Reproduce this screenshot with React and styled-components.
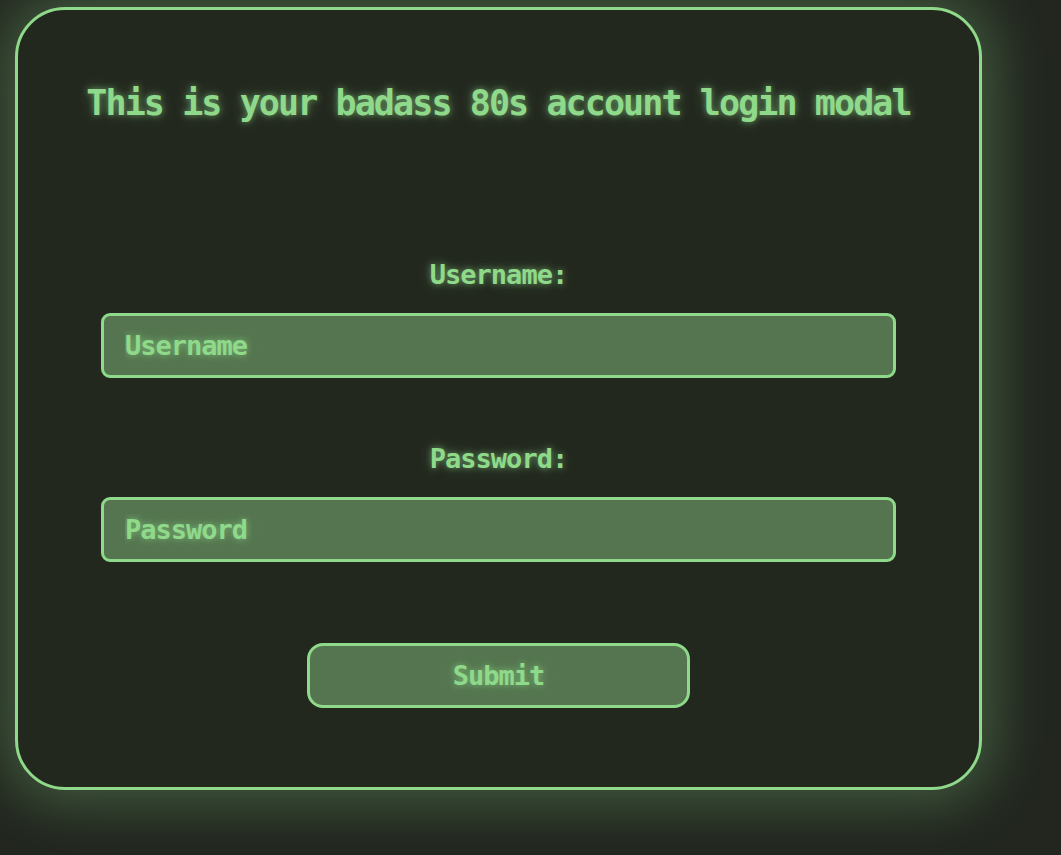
import React from "react";
import styled, {createGlobalStyle} from "styled-components";

const GlobalStyle = createGlobalStyle`
  html, body {
    margin: 0;
    padding: 0;
    background: #22261f;
  }
  * {
    box-sizing: border-box;
  }
`;

const green = "#8fd98a";
const glow = "0 0 6px rgba(143, 217, 138, 0.55), 0 0 14px rgba(143, 217, 138, 0.3)";

const Page = styled.div`
  min-height: 855px;
  padding: 7px 0 0 15px;
  font-family: "DejaVu Sans Mono", "Liberation Mono", monospace;
  font-weight: bold;
  color: ${green};
`;

const Modal = styled.div`
  width: 967px;
  height: 783px;
  border: 3px solid ${green};
  border-radius: 50px;
  background: #23281f;
  box-shadow: 0 0 55px 12px rgba(143, 217, 138, 0.3);
  display: flex;
  flex-direction: column;
  align-items: center;
  padding-top: 73px;
`;

const Title = styled.h1`
  margin: 0;
  font-size: 35px;
  line-height: 40px;
  letter-spacing: -1.9px;
  font-weight: bold;
  text-shadow: ${glow};
`;

const Form = styled.form`
  width: 795px;
  display: flex;
  flex-direction: column;
  align-items: center;
  margin-top: 137px;
`;

const Label = styled.label`
  font-size: 27px;
  line-height: 30px;
  letter-spacing: -1px;
  text-shadow: ${glow};
  margin-top: ${(p) => (p.first ? "0" : "66px")};
`;

const Input = styled.input`
  width: 100%;
  height: 65px;
  margin-top: 23px;
  padding: 0 21px;
  border: 3px solid ${green};
  border-radius: 9px;
  background: #557550;
  color: ${green};
  font-family: inherit;
  font-weight: bold;
  font-size: 27px;
  letter-spacing: -1px;
  outline: none;

  &::placeholder {
    color: ${green};
    opacity: 1;
    text-shadow: ${glow};
  }
`;

const SubmitButton = styled.button`
  width: 383px;
  height: 65px;
  margin-top: 81px;
  border: 3px solid ${green};
  border-radius: 16px;
  background: #557550;
  color: ${green};
  font-family: inherit;
  font-weight: bold;
  font-size: 27px;
  letter-spacing: -1px;
  text-shadow: ${glow};
  cursor: pointer;
`;

const App = () => {
    return (
        <>
            <GlobalStyle/>
            <Page>
                <Modal>
                    <Title>This is your badass 80s account login modal</Title>
                    <Form onSubmit={(e) => e.preventDefault()}>
                        <Label first htmlFor="username">Username:</Label>
                        <Input id="username" type="text" placeholder="Username"/>
                        <Label htmlFor="password">Password:</Label>
                        <Input id="password" type="password" placeholder="Password"/>
                        <SubmitButton type="submit">Submit</SubmitButton>
                    </Form>
                </Modal>
            </Page>
        </>
    );
};

export default App;
